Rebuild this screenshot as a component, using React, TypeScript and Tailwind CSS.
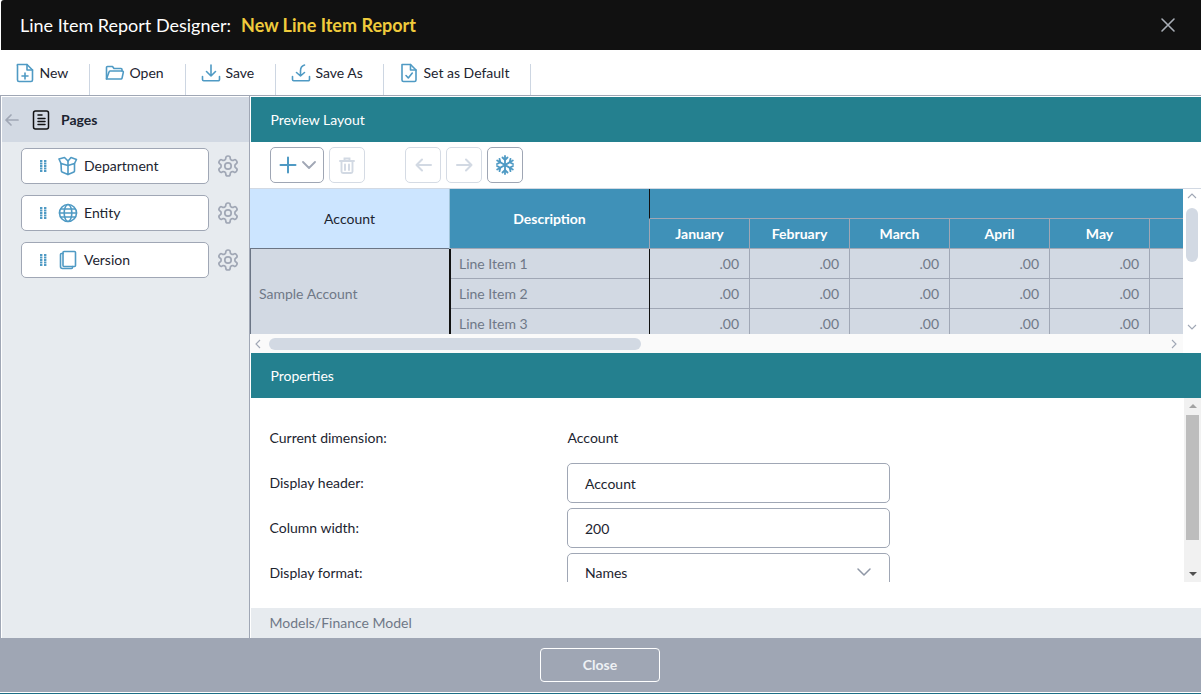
import React from "react";

const BLUE = "#4f9ac4";

const Ic = ({ children, size = 20, className = "" }: { children: React.ReactNode; size?: number; className?: string }) => (
  <svg width={size} height={size} viewBox="0 0 20 20" fill="none" stroke={BLUE} strokeWidth={1.6} strokeLinecap="round" strokeLinejoin="round" className={className}>
    {children}
  </svg>
);

const tools: { label: string; w: string; icon: React.ReactNode }[] = [
  {
    label: "New",
    w: "w-[90px]",
    icon: (
      <Ic>
        <path d="M2.500 1.500h9.500L17.500 7v10a1.500 1.500 0 0 1-1.500 1.500H4A1.500 1.500 0 0 1 2.500 17V3a1.500 1.500 0 0 1 0-1.500z" />
        <path d="M12 1.500V7h5.500" />
        <path d="M10 10v6M7 13h6" />
      </Ic>
    ),
  },
  {
    label: "Open",
    w: "w-[96px]",
    icon: (
      <Ic>
        <path d="M1.500 16V4.500a1 1 0 0 1 1-1h5l1.500 2h7a1 1 0 0 1 1 1V8" />
        <path d="M1.500 16 4 9a1.200 1.200 0 0 1 1.100-1h12.200a1 1 0 0 1 1 1.300L17 15.300a1 1 0 0 1-1 .7z" />
      </Ic>
    ),
  },
  {
    label: "Save",
    w: "w-[90px]",
    icon: (
      <Ic>
        <path d="M10 2v11M5.500 8.500 10 13l4.500-4.500" />
        <path d="M1.500 13.500v3a1.200 1.200 0 0 0 1.200 1.200h14.600a1.200 1.200 0 0 0 1.200-1.200v-3" />
      </Ic>
    ),
  },
  {
    label: "Save As",
    w: "w-[108px]",
    icon: (
      <Ic>
        <path d="M13.500 2C10.800 2.800 9.500 5 9.500 8v5M5.500 9.500l4 3.500 4-3.500" />
        <path d="M1.500 13.500v3a1.200 1.200 0 0 0 1.200 1.200h14.600a1.200 1.200 0 0 0 1.200-1.200v-3" />
      </Ic>
    ),
  },
  {
    label: "Set as Default",
    w: "w-[147px]",
    icon: (
      <Ic>
        <path d="M3 1.500h8.500L17 7v10a1.500 1.500 0 0 1-1.500 1.500h-11A1.500 1.500 0 0 1 3 17z" />
        <path d="M11.500 1.500V7H17" />
        <path d="m7 12.500 2.300 2.500 4-5" />
      </Ic>
    ),
  },
];

const Gear = () => (
  <svg width="24" height="24" viewBox="0 0 24 24" fill="none" stroke="#a0a7b5" strokeWidth={1.7} strokeLinecap="round" strokeLinejoin="round" className="ml-[7px]">
    <path d="M12.220 2h-.44a2 2 0 0 0-2 2v.18a2 2 0 0 1-1 1.730l-.43.25a2 2 0 0 1-2 0l-.15-.08a2 2 0 0 0-2.730.73l-.22.38a2 2 0 0 0 .73 2.730l.15.1a2 2 0 0 1 1 1.720v.51a2 2 0 0 1-1 1.740l-.15.09a2 2 0 0 0-.73 2.730l.22.38a2 2 0 0 0 2.730.73l.15-.08a2 2 0 0 1 2 0l.43.25a2 2 0 0 1 1 1.730V20a2 2 0 0 0 2 2h.44a2 2 0 0 0 2-2v-.18a2 2 0 0 1 1-1.730l.43-.25a2 2 0 0 1 2 0l.15.08a2 2 0 0 0 2.730-.73l.22-.39a2 2 0 0 0-.73-2.730l-.15-.08a2 2 0 0 1-1-1.740v-.5a2 2 0 0 1 1-1.740l.15-.09a2 2 0 0 0 .73-2.730l-.22-.38a2 2 0 0 0-2.730-.73l-.15.08a2 2 0 0 1-2 0l-.43-.25a2 2 0 0 1-1-1.730V4a2 2 0 0 0-2-2z" />
    <circle cx="12" cy="12" r="3.200" />
  </svg>
);

const Grip = () => (
  <svg width="7" height="12" viewBox="0 0 7 12" fill={BLUE} className="mr-[11px]">
    {[0, 2.5, 5, 7.5, 10].map((y) => (
      <g key={y}>
        <rect x="0" y={y} width="2.400" height="2" />
        <rect x="4" y={y} width="2.400" height="2" />
      </g>
    ))}
  </svg>
);

const dims: { label: string; icon: React.ReactNode }[] = [
  {
    label: "Department",
    icon: (
      <Ic>
        <path d="M3 7.500 10 9.500V18.500L4 16a1 1 0 0 1-.6-.9z" />
        <path d="M10 9.500 16.500 7.500V15.100a1 1 0 0 1-.6.9L10 18.500" />
        <path d="M3 7.500 1 3 6.500 1.500 10 5" />
        <path d="M10 9.500V5l3-3.500 5.500 2-2 4" />
      </Ic>
    ),
  },
  {
    label: "Entity",
    icon: (
      <Ic>
        <circle cx="10" cy="10" r="8.500" />
        <path d="M1.500 10h17M3 6h14M3 14h14" />
        <ellipse cx="10" cy="10" rx="3.800" ry="8.500" />
      </Ic>
    ),
  },
  {
    label: "Version",
    icon: (
      <Ic>
        <rect x="5" y="1.500" width="12.500" height="15" rx="1" />
        <path d="M5 3.500H3.500A1 1 0 0 0 2.500 4.500v12a2 2 0 0 0 2 2h9a1 1 0 0 0 1-1v-1" />
      </Ic>
    ),
  },
];

const months = ["January", "February", "March", "April", "May"];
const ToolBtn = ({ children, on = false, className = "" }: { children: React.ReactNode; on?: boolean; className?: string }) => (
  <div className={`h-[36px] flex items-center justify-center rounded-[5px] border bg-white ${on ? "border-[#9fa6b4]" : "border-[#d5dbe4]"} ${className}`}>
    {children}
  </div>
);

export default function App() {
  return (
    <div className="w-[1201px] h-[694px] overflow-hidden bg-white flex flex-col text-[14px] text-[#1c2430]" style={{ fontFamily: "Lato, 'Liberation Sans', sans-serif" }}>
      {/* title */}
      <div className="h-[50px] shrink-0 bg-[#111111] flex items-center pl-[19px] pr-[25px] ml-[1px] rounded-tl-[3px]">
        <span className="text-[18px] text-white">Line Item Report Designer:</span>
        <span className="text-[18px] font-bold text-[#f0cb3c] ml-[10px]">New Line Item Report</span>
        <svg width="16" height="16" viewBox="0 0 16 16" className="ml-auto" stroke="#a9aeb6" strokeWidth="1.600" strokeLinecap="round">
          <path d="M2 2l12 12M14 2 2 14" />
        </svg>
      </div>

      {/* toolbar */}
      <div className="h-[46px] shrink-0 flex border-b border-[#a0a7b5] bg-white">
        {tools.map((t) => (
          <div key={t.label} className={`${t.w} pl-[15px] h-[31px] mt-[14px] border-r border-[#cdd6e2] flex items-start gap-[4.500px]`}>
            <span className="mt-[-1px] shrink-0">{t.icon}</span>
            <span className="leading-[18px] text-[14px]">{t.label}</span>
          </div>
        ))}
      </div>

      {/* middle */}
      <div className="h-[542px] shrink-0 flex border-l border-[#a0a7b5]">
        {/* left */}
        <div className="w-[249px] shrink-0 border-l border-white border-r-[#a0a7b5] border-r bg-white pt-[1px]">
          <div className="h-[45px] bg-[#d2d9e3] flex items-center pl-[2px]">
            <svg width="15" height="14" viewBox="0 0 15 14" fill="none" stroke="#a0a7b5" strokeWidth="1.700" strokeLinecap="round" strokeLinejoin="round">
              <path d="M14 7H2M7 2 2 7l5 5" />
            </svg>
            <svg width="18" height="20" viewBox="0 0 18 20" fill="none" stroke="#111" strokeWidth="1.500" strokeLinecap="round" className="ml-[13px]">
              <rect x="1.500" y="1" width="15" height="18" rx="2" />
              <path d="M6 5h4M6 8.500h7M6 11.500h7M6 14.500h7" />
            </svg>
            <span className="ml-[11px] font-bold text-[14px] text-[#1c2430]">Pages</span>
          </div>
          <div className="h-[496px] bg-[#e7ebef] pl-[19px] pt-[6px] flex flex-col gap-[11px]">
            {dims.map((d) => (
              <div key={d.label} className="flex items-center h-[36px]">
                <div className="w-[188px] h-[36px] rounded-[5px] border border-[#a0a7b5] bg-white flex items-center pl-[18px]">
                  <Grip />
                  <span className="w-[20px] flex shrink-0">{d.icon}</span>
                  <span className="ml-[6px] mb-[2px]">{d.label}</span>
                </div>
                <Gear />
              </div>
            ))}
          </div>
        </div>

        {/* right */}
        <div className="flex-1 min-w-0 flex flex-col">
          <div className="h-[45px] mt-[1px] shrink-0 bg-[#24808f] text-white flex items-center pl-[19.500px] ml-[1px]">Preview Layout</div>
          <div className="h-[46px] shrink-0 flex items-center pl-[20px]">
            <ToolBtn on className="w-[54px] gap-[5px]">
              <svg width="18" height="18" viewBox="0 0 18 18" stroke={BLUE} strokeWidth="2" strokeLinecap="round">
                <path d="M9 1.500v15M1.500 9h15" />
              </svg>
              <svg width="14" height="8" viewBox="0 0 14 8" fill="none" stroke="#a0a7b5" strokeWidth="1.800" strokeLinecap="round" strokeLinejoin="round">
                <path d="m1 1 6 6 6-6" />
              </svg>
            </ToolBtn>
            <ToolBtn className="w-[36px] ml-[5px]">
              <svg width="16" height="17" viewBox="0 0 16 17" fill="none" stroke="#d2d9e3" strokeWidth="1.900" strokeLinecap="round">
                <path d="M1 4h14M5.500 4V1.500h5V4M2.500 4v10.500a1.500 1.500 0 0 0 1.500 1.500h8a1.500 1.500 0 0 0 1.500-1.500V4M6 7.500v5.500M10 7.500v5.500" />
              </svg>
            </ToolBtn>
            <ToolBtn className="w-[36px] ml-[40px]">
              <svg width="17" height="14" viewBox="0 0 17 14" fill="none" stroke="#d2d9e3" strokeWidth="2" strokeLinecap="round" strokeLinejoin="round">
                <path d="M16 7H1.500M7 1.500 1.500 7 7 12.500" />
              </svg>
            </ToolBtn>
            <ToolBtn className="w-[36px] ml-[5px]">
              <svg width="17" height="14" viewBox="0 0 17 14" fill="none" stroke="#d2d9e3" strokeWidth="2" strokeLinecap="round" strokeLinejoin="round">
                <path d="M1 7h14.500M10 1.500 15.500 7 10 12.500" />
              </svg>
            </ToolBtn>
            <ToolBtn on className="w-[36px] ml-[5px]">
              <svg width="20" height="20" viewBox="0 0 20 20" fill="none" stroke={BLUE} strokeWidth="1.800" strokeLinecap="round">
                <path d="M10 1v18M2.200 5.500l15.600 9M17.800 5.500l-15.600 9" />
                <path d="M7.500 2.500 10 5l2.500-2.500M7.500 17.500 10 15l2.500 2.500M2 9l3.300-1.800L4.500 3.800M18 9l-3.300-1.800.8-3.400M2 11l3.300 1.800-.8 3.400M18 11l-3.300 1.800.8 3.400" />
              </svg>
            </ToolBtn>
          </div>

          {/* grid */}
          <div className="h-[146px] shrink-0 flex border-t border-[#d2d9e3] relative">
            <div className="w-[933px] shrink-0 overflow-hidden flex text-[14px]">
              <div className="w-[199px] shrink-0">
                <div className="h-[60px] bg-[#cce5ff] flex items-center justify-center border-b border-[#6b7585]">Account</div>
                <div className="h-[86px] bg-[#d2d9e3] border-l border-[#6b7585] flex items-center pl-[8px] text-[#6f7887]">
                  <span className="mt-[3px]">Sample Account</span>
                </div>
              </div>
              <div className="w-[200px] shrink-0">
                <div className="h-[60px] bg-[#3f91b8] text-white font-bold flex items-center justify-center border-l border-[#a0c3d8] border-b border-b-[#a0a7b5]">Description</div>
                <div className="border-l-2 border-[#111] h-[86px] overflow-hidden">
                  {["Line Item 1", "Line Item 2", "Line Item 3"].map((l) => (
                    <div key={l} className="h-[30px] bg-[#d2d9e3] border-b border-[#a0a7b5] pl-[8px] flex items-center text-[#6f7887]">{l}</div>
                  ))}
                </div>
              </div>
              <div className="flex-1 min-w-0 overflow-hidden">
                <div className="h-[30px] bg-[#3f91b8] border-l border-[#111] border-b border-b-[#a0a7b5]" />
                <div className="h-[30px] bg-[#3f91b8] flex border-b border-[#a0a7b5] overflow-hidden">
                  {[...months, ""].map((m) => (
                    <div key={m} className="w-[100px] shrink-0 border-l border-[#a0a7b5] text-white font-bold flex items-center justify-center">{m}</div>
                  ))}
                </div>
                <div className="h-[86px] overflow-hidden border-l border-[#111]">
                  {[0, 1, 2].map((r) => (
                    <div key={r} className="h-[30px] flex bg-[#d2d9e3] border-b border-[#a0a7b5]">
                      {[...months, ""].map((m, c) => (
                        <div key={m} className={`${c ? "w-[100px] border-l border-[#a0a7b5]" : "w-[99px]"} shrink-0 flex items-center justify-end pr-[10px] text-[#6f7887]`}>{m ? ".00" : ""}</div>
                      ))}
                    </div>
                  ))}
                </div>
              </div>
            </div>
            <div className="flex-1 bg-white flex flex-col items-center justify-between py-[4px]">
              <svg width="10" height="6" viewBox="0 0 10 6" fill="none" stroke="#a0a7b5" strokeWidth="1.100"><path d="m1 5 4-4 4 4" /></svg>
              <div className="absolute top-[19px] right-[3px] w-[12px] h-[54px] rounded-[6px] bg-[#d2d9e3]" />
              <svg width="10" height="6" viewBox="0 0 10 6" fill="none" stroke="#a0a7b5" strokeWidth="1.100"><path d="m1 1 4 4 4-4" /></svg>
            </div>
          </div>
          <div className="h-[19px] shrink-0 flex items-center bg-white">
            <div className="w-[933px] h-[19px] bg-[#fafafa] flex items-center pl-[5px] pr-[6px]">
              <svg width="6" height="10" viewBox="0 0 6 10" fill="none" stroke="#a0a7b5" strokeWidth="1.100"><path d="M5 1 1 5l4 4" /></svg>
              <div className="ml-[8px] w-[372px] h-[12px] rounded-[6px] bg-[#d2d9e3]" />
              <svg width="6" height="10" viewBox="0 0 6 10" fill="none" stroke="#a0a7b5" strokeWidth="1.100" className="ml-auto"><path d="m1 1 4 4-4 4" /></svg>
            </div>
          </div>

          {/* properties */}
          <div className="h-[45px] shrink-0 bg-[#24808f] text-white flex items-center pl-[19.500px] ml-[1px]">Properties</div>
          <div className="h-[184px] shrink-0 flex overflow-hidden">
            <div className="flex-1 min-w-0 overflow-hidden pl-[19.500px] pt-[20px]">
              <div className="h-[40px] flex items-center">
                <span className="w-[298px] shrink-0 mb-[2px]">Current dimension:</span>
                <span className="mb-[2px]">Account</span>
              </div>
              <div className="h-[40px] mt-[5px] flex items-center">
                <span className="w-[297.500px] shrink-0 mt-[-2px]">Display header:</span>
                <div className="w-[323px] h-[40px] rounded-[5px] border border-[#a0a7b5] flex items-center pl-[17px]">Account</div>
              </div>
              <div className="h-[40px] mt-[5px] flex items-center">
                <span className="w-[297.500px] shrink-0 mt-[-2px]">Column width:</span>
                <div className="w-[323px] h-[40px] rounded-[5px] border border-[#a0a7b5] flex items-center pl-[17px]">200</div>
              </div>
              <div className="h-[40px] mt-[5px] flex items-start">
                <span className="w-[297.500px] shrink-0 mt-[9px]">Display format:</span>
                <div className="w-[323px] h-[40px] rounded-[5px] border border-[#a0a7b5] flex items-center pl-[17px] pr-[18px] justify-between">
                  <span className="mb-[2px]">Names</span>
                  <svg width="14" height="8" viewBox="0 0 14 8" fill="none" stroke="#8f97a6" strokeWidth="1.500" strokeLinecap="round" strokeLinejoin="round" className="mb-[2px]"><path d="m1 1 6 6 6-6" /></svg>
                </div>
              </div>
            </div>
            <div className="w-[17px] shrink-0 bg-[#f1f1f1] flex flex-col items-center justify-between py-[6px] relative">
              <svg width="8" height="4" viewBox="0 0 8 4" fill="#a3a3a3"><path d="M4 0 8 4H0z" /></svg>
              <div className="absolute top-[17px] left-[2px] w-[13px] h-[125px] bg-[#bdbdbd]" />
              <svg width="8" height="4" viewBox="0 0 8 4" fill="#505050"><path d="M0 0h8L4 4z" /></svg>
            </div>
          </div>
          <div className="h-[26px] shrink-0" />
          <div className="h-[30px] shrink-0 bg-[#e7ebef] ml-[1px] flex items-center pl-[18.500px] pb-[2px] text-[#6f7887]">Models/Finance Model</div>
        </div>
      </div>

      {/* footer */}
      <div className="h-[54px] shrink-0 bg-[#9fa6b4] flex items-center justify-center pr-[1px]">
        <div className="w-[120px] h-[34px] rounded-[4px] border border-white text-[#eef1f4] font-bold text-[14px] flex items-center justify-center pb-[2px]">Close</div>
      </div>
      <div className="h-[2px] shrink-0 bg-white border-b border-[#1e6f86]" />
    </div>
  );
}
